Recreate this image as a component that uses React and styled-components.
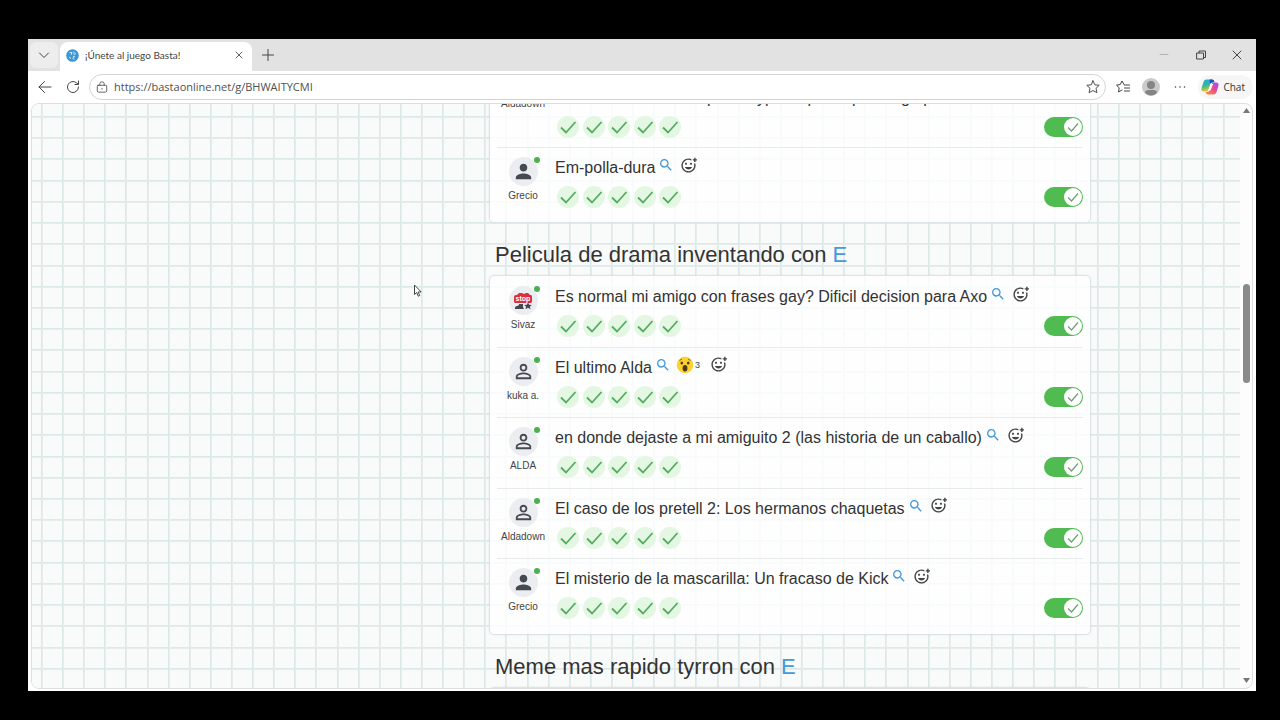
import React, { useState } from 'react';
import styled, { createGlobalStyle } from 'styled-components';
import { MdSearch, MdPerson, MdPersonOutline, MdOutlineAddReaction } from 'react-icons/md';

// notebook paper: 9 squares per tile
const paperLines = (direction, tile) => {
  const stops = [];
  for (let i = 0; i < 9; i += 1) {
    const at = Math.round((i * tile) / 9);
    stops.push(`#dde8e8 ${at}px ${at + 1}px`, `#e5eded ${at + 1}px ${at + 2}px`, `transparent ${at + 2}px`);
    if (i < 8) stops.push(`transparent ${Math.round(((i + 1) * tile) / 9)}px`);
  }
  return `linear-gradient(${direction}, ${stops.join(', ')})`;
};

const GlobalStyle = createGlobalStyle`
  * {
    box-sizing: border-box;
  }

  body {
    margin: 0;
    background: #000;
    font-family: "Liberation Sans", Arial, sans-serif;
    color: #333;
  }

  button, input {
    font-family: inherit;
    color: inherit;
  }

  svg {
    display: block;
    flex: none;
  }
`;

const Screen = styled.div`
  display: flex;
  height: 100vh;
  padding: 39px 24px 29px 28px;
  background: #000;
`;

const BrowserWindow = styled.div`
  flex: 1;
  min-width: 0;
  display: flex;
  flex-direction: column;
  background: #fff;
`;

const TabBar = styled.div`
  display: flex;
  align-items: center;
  height: 32px;
  padding: 0 1px 0 2px;
  background: #e2e2e2;
  font-family: Lato, "Open Sans", sans-serif;
`;

const IconButton = styled.button`
  display: flex;
  align-items: center;
  justify-content: center;
  width: ${({ $width }) => $width || 28}px;
  height: 26px;
  padding: 0;
  border: none;
  border-radius: 6px;
  background: ${({ $filled }) => ($filled ? '#ededed' : 'none')};
  color: #444;
  cursor: pointer;
`;

const Tab = styled.div`
  display: flex;
  align-items: center;
  align-self: flex-end;
  gap: 6px;
  width: 192px;
  height: 29px;
  margin-left: 2px;
  padding: 0 2px 3px 6px;
  border-radius: 8px 8px 0 0;
  background: #fff;
  font-size: 10px;
`;

const TabTitle = styled.span`
  flex: 1;
  white-space: nowrap;
  color: #444;
`;

const WindowControls = styled.div`
  display: flex;
  margin-left: auto;
`;

const Toolbar = styled.div`
  display: flex;
  align-items: center;
  height: 32px;
  padding: 0 3px;
  font-family: "Open Sans", "Noto Sans", sans-serif;
`;

const AddressBar = styled.label`
  flex: 1;
  display: flex;
  align-items: center;
  gap: 6px;
  height: 26px;
  margin: 0 3px 0 2px;
  padding: 0 5px 1px 6px;
  border: 1px solid #d4d4d4;
  border-radius: 13px;
  color: #505050;

  input {
    flex: 1;
    min-width: 0;
    padding: 0;
    border: none;
    outline: none;
    background: none;
    font-size: 11px;
  }
`;

const ChatButton = styled.button`
  display: flex;
  align-items: center;
  gap: 4px;
  height: 24px;
  margin-left: 3px;
  padding: 0 8px 0 3px;
  border: none;
  border-radius: 12px;
  background: #f6f6f6;
  font-size: 10px;
  cursor: pointer;
`;

const Viewport = styled.div`
  position: relative;
  flex: 1;
  min-height: 0;
  display: flex;
  margin: 0 3px 2px;
  overflow: hidden;
  border: 1px solid #dedede;
  border-radius: 8px;
  background: #fdfdfd;
`;

const Paper = styled.main`
  flex: 1;
  min-width: 0;
  display: flex;
  justify-content: flex-end;
  overflow: hidden;
  padding-right: 149px;
  background-color: #f9fafa;
  background-image: ${paperLines('to right', 190)}, ${paperLines('to bottom', 191)};
  background-size: 190px 191px;
  background-position: 9px 12px;
`;

// the page is scrolled, so the first card starts above the viewport
const Answers = styled.div`
  flex: 0 1 602px;
  min-width: 0;
  margin-top: -50px;
`;

const CategoryTitle = styled.h2`
  margin: 19px 0 7px;
  padding-left: 6px;
  font-size: 22px;
  font-weight: 400;
  line-height: 26px;
  white-space: nowrap;

  span {
    color: #4299dc;
  }
`;

const Card = styled.ul`
  display: grid;
  grid-auto-rows: ${({ $tall }) => ($tall ? '1fr' : 'auto')};
  min-height: ${({ $tall }) => ($tall ? 360 : 0)}px;
  margin: 0;
  padding: 0 7px 5px;
  list-style: none;
  border: 1px solid #dce3e6;
  border-radius: 5px;
  background: rgba(255, 255, 255, 0.8);
  box-shadow: 0 0 2px rgba(0, 0, 0, 0.08);
`;

const AnswerRow = styled.li`
  display: flex;
  gap: 6px;
  padding: 10px 0 9px;

  & + & {
    padding-top: 9px;
    border-top: 1px solid #e6eaea;
  }
`;

const Player = styled.div`
  display: flex;
  flex-direction: column;
  align-items: center;
  gap: 4px;
  width: 52px;
  height: 45px;
  font-size: 10px;
  line-height: 12px;
  color: #444;
`;

const Avatar = styled.div`
  position: relative;
  display: flex;
  align-items: center;
  justify-content: center;
  width: 29px;
  height: 29px;
  border-radius: 50%;
  background: #ebedf0;
  color: #454a52;

  &::after {
    content: '';
    position: absolute;
    top: 0;
    right: -2px;
    width: 6px;
    height: 6px;
    border-radius: 50%;
    background: #4cb050;
  }
`;

const AnswerBody = styled.div`
  flex: 1;
  min-width: 0;
`;

const AnswerLine = styled.div`
  display: flex;
  align-items: flex-end;
  font-size: 16px;
  line-height: 22px;
  white-space: pre-line;
`;

const LineButton = styled.button`
  display: flex;
  align-items: center;
  gap: 1px;
  height: 16px;
  margin: 0 0 6px ${({ $gap }) => $gap}px;
  padding: 0;
  border: none;
  background: none;
  font-size: 9px;
  color: ${({ $blue }) => ($blue ? '#4299dc' : '#444')};
  cursor: pointer;
`;

const VoteLine = styled.div`
  display: flex;
  align-items: center;
  justify-content: space-between;
  height: 22px;
  margin-top: 7px;
`;

const Votes = styled.div`
  display: flex;
  justify-content: space-between;
  width: 124px;
  margin-left: 2px;
`;

const Vote = styled.span`
  width: 22px;
  height: 22px;
  border-radius: 50%;
  background: #e3f7e3;
`;

const Toggle = styled.label`
  display: flex;
  justify-content: ${({ $on }) => ($on ? 'flex-end' : 'flex-start')};
  align-items: center;
  width: 39px;
  height: 20px;
  padding: 1px;
  border-radius: 10px;
  background: ${({ $on }) => ($on ? '#50bb50' : '#bbb')};
  cursor: pointer;

  input {
    position: absolute;
    opacity: 0;
    width: 1px;
    height: 1px;
    margin: 0;
  }
`;

const Knob = styled.span`
  width: 18px;
  height: 18px;
  border-radius: 50%;
  background: #fff;
`;

const Scrollbar = styled.div`
  display: flex;
  flex-direction: column;
  align-items: center;
  width: 12px;
  padding: 4px 0;
`;

const Track = styled.div`
  flex: 1;
  display: flex;
  flex-direction: column;

  &::before {
    content: '';
    flex: 170;
  }

  &::after {
    content: '';
    flex: 295;
  }
`;

const Thumb = styled.div`
  width: 7px;
  height: 99px;
  border-radius: 4px;
  background: #8a8a8a;
`;

const Pointer = styled.svg`
  position: absolute;
  top: 180px;
  left: 381px;
`;

const Line = ({ d, size = 14, width = 1, fill = 'none' }) => (
  <svg width={size} height={size} viewBox="0 0 14 14" fill={fill} stroke="currentColor" strokeWidth={width} strokeLinecap="round" strokeLinejoin="round">
    <path d={d} />
  </svg>
);

const Favicon = () => (
  <svg width="13" height="13" viewBox="0 0 13 13">
    <circle cx="6.5" cy="6.5" r="6.3" fill="#3b97d3" />
    <path d="M3.500 3.500h2.500l-1 2.500M8 2.500v3M10 4.500l-1.500 1M3 8l2 1.500M7 7.500c2-1 2 .8.5 1s-1 2 1 1.500" stroke="#cfe8fa" fill="none" />
  </svg>
);

const ProfilePicture = () => (
  <svg width="18" height="18" viewBox="0 0 18 18">
    <circle cx="9" cy="9" r="9" fill="#cacaca" />
    <circle cx="9" cy="7" r="4" fill="#848484" />
    <path d="M3 14.500c0-2 2-2.500 6-2.500s6 .5 6 2.500c-1.500 2-3.500 3-6 3s-4.500-1-6-3z" fill="#848484" />
  </svg>
);

const CopilotLogo = () => (
  <svg width="18" height="18" viewBox="0 0 18 18">
    <defs>
      <linearGradient id="cool" x1="0" y1="0" x2="0.300" y2="1">
        <stop offset="0" stopColor="#1fa8e8" />
        <stop offset="0.550" stopColor="#35b89b" />
        <stop offset="1" stopColor="#f0c52e" />
      </linearGradient>
      <linearGradient id="warm" x1="1" y1="0" x2="0.200" y2="1">
        <stop offset="0" stopColor="#9a55ea" />
        <stop offset="0.500" stopColor="#e84694" />
        <stop offset="1" stopColor="#fa8a3c" />
      </linearGradient>
    </defs>
    <path d="M5.500 1.500h5.500c1.500 0 2 1 2.300 2.500h-1.500c-1.300 0-2 .8-2.400 2L7.700 11c-.5 1.600-1.200 2.500-2.700 2.500H3C.8 13.500 0 12 .6 10l1.700-5.500c.6-2 1.600-3 3.200-3z" fill="url(#cool)" />
    <path d="M8.500 1.500h2.500c1.500 0 2 1 2.400 2.700l-2.200.3-2 1z" fill="#1b4fc4" />
    <path d="M12.500 16.500H7c-1.500 0-2-1-2.300-2.500h1.500c1.300 0 2-.8 2.400-2L10.300 7c.5-1.600 1.200-2.500 2.700-2.500h2c2.200 0 3 1.500 2.400 3.500l-1.700 5.500c-.6 2-1.600 3-3.200 3z" fill="url(#warm)" />
    <path d="M9.800 6h2.400l-2.700 6.500H7.300z" fill="#fff" />
  </svg>
);

const StopAvatar = () => (
  <svg width="20" height="20" viewBox="0 0 20 20">
    <path d="M4 4l2-2h3l2 1 2-1h2l2 2c1.500 0 2 .5 2 2v4c0 1.500-.5 2-2 2H3c-1.500 0-2-.5-2-2V6c0-1.500 1-2 3-2z" fill="#d9303b" />
    <text x="10" y="10" textAnchor="middle" fontSize="7" fontWeight="700" fill="#fff">stop</text>
    <path d="M2 16l4-2V13h4v3l1 2H2z" fill="#43474f" />
    <path d="M15 11.500l1.200 2.300 2.600.2-1.900 1.700.6 2.500-2.500-1.400-2.500 1.400.6-2.500-1.900-1.700 2.600-.2z" fill="#43474f" />
  </svg>
);

const WowFace = () => (
  <svg width="18" height="18" viewBox="0 0 18 18">
    <circle cx="9" cy="9" r="8.300" fill="#fcd22f" />
    <path d="M3.500 4.500l2.500-1.500M12 3l2.500 1.500" stroke="#8a6414" fill="none" />
    <ellipse cx="5.800" cy="7" rx="1.300" ry="1.600" fill="#4e3a1c" />
    <ellipse cx="12.200" cy="7" rx="1.300" ry="1.600" fill="#4e3a1c" />
    <ellipse cx="9" cy="12.300" rx="2.400" ry="3.300" fill="#4e3a1c" />
  </svg>
);

const avatars = {
  solid: <MdPerson size={23} />,
  outline: <MdPersonOutline size={23} />,
  stop: <StopAvatar />,
};

const previousAnswers = [
  {
    player: 'Aldadown',
    avatar: 'outline',
    text: 'El caso de la historia\nEl mundo de los seis pero crypto si por el para algo por',
  },
  { player: 'Grecio', avatar: 'solid', text: 'Em-polla-dura' },
];

const dramaAnswers = [
  { player: 'Sivaz', avatar: 'stop', text: 'Es normal mi amigo con frases gay? Dificil decision para Axo' },
  { player: 'kuka a.', avatar: 'outline', text: 'El ultimo Alda', wows: 3 },
  { player: 'ALDA', avatar: 'outline', text: 'en donde dejaste a mi amiguito 2 (las historia de un caballo)' },
  { player: 'Aldadown', avatar: 'outline', text: 'El caso de los pretell 2: Los hermanos chaquetas' },
  { player: 'Grecio', avatar: 'solid', text: 'El misterio de la mascarilla: Un fracaso de Kick' },
];

function Answer({ player, avatar, text, wows }) {
  const [valid, setValid] = useState(true);

  return (
    <AnswerRow>
      <Player>
        <Avatar>{avatars[avatar]}</Avatar>
        {player}
      </Player>
      <AnswerBody>
        <AnswerLine>
          <span>{text}</span>
          <LineButton type="button" $blue $gap={3} aria-label="Buscar">
            <MdSearch size={16} />
          </LineButton>
          {wows && (
            <LineButton type="button" $gap={5}>
              <WowFace />
              {wows}
            </LineButton>
          )}
          <LineButton type="button" $gap={wows ? 10 : 6} aria-label="Reaccionar">
            <MdOutlineAddReaction size={17} />
          </LineButton>
        </AnswerLine>
        <VoteLine>
          <Votes>
            {[1, 2, 3, 4, 5].map((vote) => (
              <Vote key={vote}>
                <svg width="22" height="22" viewBox="0 0 22 22" fill="none" stroke="#55ab60" strokeWidth="1.800">
                  <path d="M4 11.500l5 5L18.500 6" />
                </svg>
              </Vote>
            ))}
          </Votes>
          <Toggle $on={valid}>
            <input
              type="checkbox"
              aria-label={`Respuesta de ${player}`}
              checked={valid}
              onChange={() => setValid(!valid)}
            />
            <Knob>
              <svg width="18" height="18" viewBox="0 0 18 18" fill="none" stroke="#6f9f72" strokeWidth="1.200">
                <path d="M4 9.500l3.500 3.500L14 5.500" />
              </svg>
            </Knob>
          </Toggle>
        </VoteLine>
      </AnswerBody>
    </AnswerRow>
  );
}

export default function App() {
  const [url, setUrl] = useState('https://bastaonline.net/g/BHWAITYCMI');

  return (
    <Screen>
      <GlobalStyle />
      <BrowserWindow>
        <TabBar>
          <IconButton $filled type="button" aria-label="Buscar pestañas">
            <Line d="M2.500 5l4.500 4.500L11.500 5" />
          </IconButton>
          <Tab>
            <Favicon />
            <TabTitle>¡Únete al juego Basta!</TabTitle>
            <IconButton $width={22} type="button" aria-label="Cerrar pestaña">
              <Line size={12} d="M3.500 3.500l7 7M10.500 3.500l-7 7" />
            </IconButton>
          </Tab>
          <IconButton $width={32} type="button" aria-label="Nueva pestaña">
            <Line d="M7 1.500v11M1.500 7h11" />
          </IconButton>
          <WindowControls>
            <IconButton $width={36} type="button" aria-label="Minimizar">
              <Line width={0.3} d="M3 6.500h8" />
            </IconButton>
            <IconButton $width={37} type="button" aria-label="Restaurar">
              <Line d="M3 5h6.500v6H3zM5 5V3h6.500v6.500H9.500" />
            </IconButton>
            <IconButton $width={36} type="button" aria-label="Cerrar">
              <Line d="M3 3l8 8M11 3l-8 8" />
            </IconButton>
          </WindowControls>
        </TabBar>
        <Toolbar>
          <IconButton type="button" aria-label="Atrás">
            <Line d="M13 7H1M6.500 1.500L1 7l5.500 5.500" />
          </IconButton>
          <IconButton type="button" aria-label="Recargar">
            <Line d="M12.500 7a5.500 5.500 0 1 1-2-4.200L12 4M12.500 1v3.500H9" />
          </IconButton>
          <AddressBar>
            <Line size={12} d="M2.500 5h9q1 0 1 1v5.500q0 1.500-1.500 1.500h-8q-1.500 0-1.500-1.500V6q0-1 1-1zM4.500 5V3q0-2 2.500-2t2.500 2v2M7 8.500v1" />
            <input aria-label="Dirección" value={url} onChange={(e) => setUrl(e.target.value)} />
            <Line d="M7 .8l1.900 4 4.300.5-3.200 3 .9 4.400L7 10.500l-3.900 2.200.9-4.400-3.200-3 4.300-.5z" />
          </AddressBar>
          <IconButton type="button" aria-label="Favoritos">
            <Line d="M8 4.500L6 1 4.300 4.500.5 5.200l2.700 2.600L2.500 12 6 10M8.500 5h5M8.500 8h5M8.500 11h5" />
          </IconButton>
          <IconButton type="button" aria-label="Perfil">
            <ProfilePicture />
          </IconButton>
          <IconButton $width={30} type="button" aria-label="Más">
            <Line width={1.6} d="M2.500 7h.01M7 7h.01M11.500 7h.01" />
          </IconButton>
          <ChatButton type="button">
            <CopilotLogo />
            Chat
          </ChatButton>
        </Toolbar>
        <Viewport>
          <Paper>
            <Answers>
              <Card>
                {previousAnswers.map((answer) => (
                  <Answer key={answer.player} {...answer} />
                ))}
              </Card>
              <CategoryTitle>
                Pelicula de drama inventando con <span>E</span>
              </CategoryTitle>
              <Card $tall>
                {dramaAnswers.map((answer) => (
                  <Answer key={answer.player} {...answer} />
                ))}
              </Card>
              <CategoryTitle>
                Meme mas rapido tyrron con <span>E</span>
              </CategoryTitle>
              <Card $tall />
            </Answers>
          </Paper>
          <Scrollbar>
            <svg width="7" height="6" viewBox="0 0 7 6" fill="#777">
              <path d="M3.500 0L7 5H0z" />
            </svg>
            <Track>
              <Thumb />
            </Track>
            <svg width="7" height="6" viewBox="0 0 7 6" fill="#777">
              <path d="M0 0h7L3.500 5z" />
            </svg>
          </Scrollbar>
          <Pointer width="10" height="14" viewBox="0 0 10 14" fill="#fff" stroke="#333" strokeWidth="0.900">
            <path d="M1.500 1v9.500l2.200-2 1.500 3.700 1.500-.6-1.500-3.600h3z" />
          </Pointer>
        </Viewport>
      </BrowserWindow>
    </Screen>
  );
}
